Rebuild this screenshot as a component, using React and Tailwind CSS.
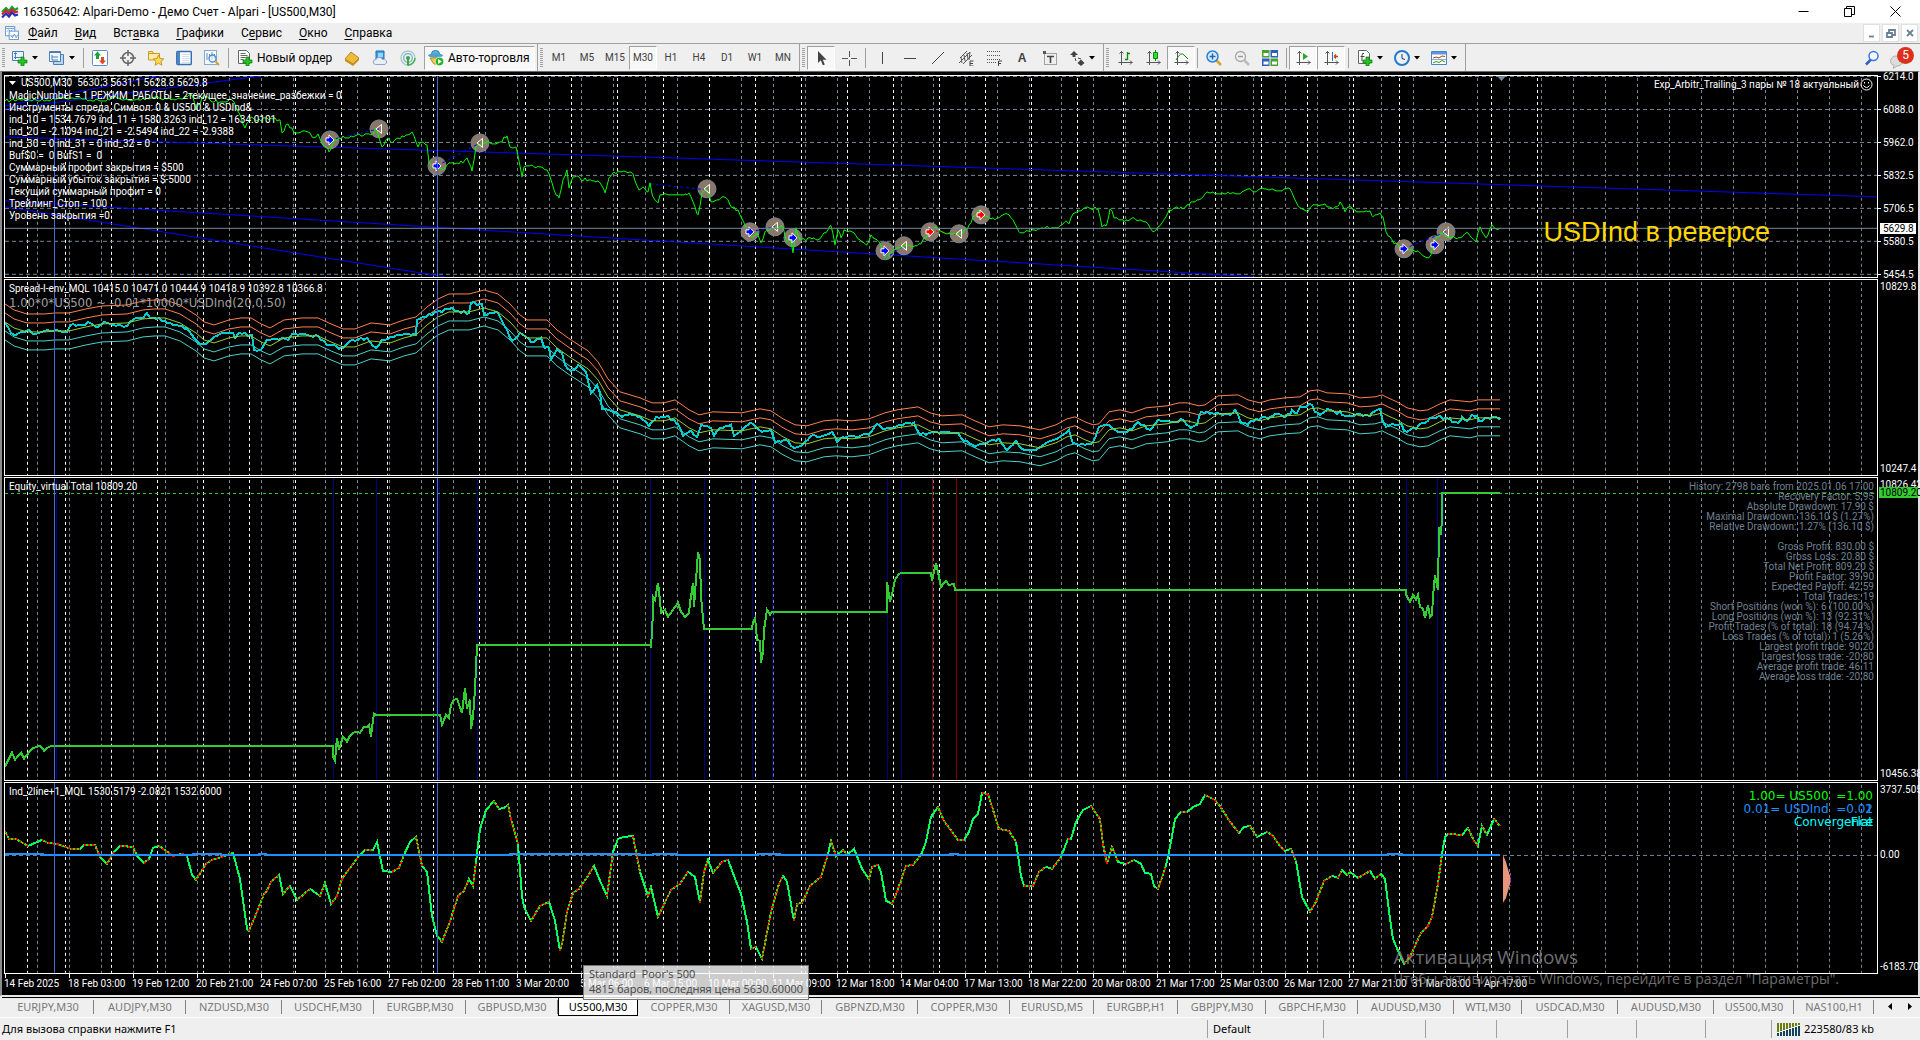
import clsx from 'clsx'

const MENU = [
    ['Ф', 'айл', ''],
    ['В', 'ид', ''],
    ['а', 'вка', 'Вст'],
    ['Г', 'рафики', ''],
    ['е', 'рвис', 'С'],
    ['О', 'кно', ''],
    ['С', 'правка', ''],
]

const TIMEFRAMES = ['M1', 'M5', 'M15', 'M30', 'H1', 'H4', 'D1', 'W1', 'MN']

const TABS = [
    ['EURJPY,M30', 'w-[92px]'],
    ['AUDJPY,M30', 'w-[92px]'],
    ['NZDUSD,M30', 'w-[96px]'],
    ['USDCHF,M30', 'w-[92px]'],
    ['EURGBP,M30', 'w-[92px]'],
    ['GBPUSD,M30', 'w-[92px]'],
    ['US500,M30', 'w-[80px]'],
    ['COPPER,M30', 'w-[92px]'],
    ['XAGUSD,M30', 'w-[92px]'],
    ['GBPNZD,M30', 'w-[96px]'],
    ['COPPER,M30', 'w-[92px]'],
    ['EURUSD,M5', 'w-[84px]'],
    ['EURGBP,H1', 'w-[84px]'],
    ['GBPJPY,M30', 'w-[88px]'],
    ['GBPCHF,M30', 'w-[92px]'],
    ['AUDUSD,M30', 'w-[96px]'],
    ['WTI,M30', 'w-[68px]'],
    ['USDCAD,M30', 'w-[96px]'],
    ['AUDUSD,M30', 'w-[96px]'],
    ['US500,M30', 'w-[80px]'],
    ['NAS100,H1', 'w-[80px]'],
]

const TIMES = [
    '14 Feb 2025', '18 Feb 03:00', '19 Feb 12:00', '20 Feb 21:00', '24 Feb 07:00', '25 Feb 16:00', '27 Feb 02:00', '28 Feb 11:00',
    '3 Mar 20:00', '5 Mar 06:00', '6 Mar 15:00', '10 Mar 00:00', '11 Mar 09:00', '12 Mar 18:00', '14 Mar 04:00', '17 Mar 13:00',
    '18 Mar 22:00', '20 Mar 08:00', '21 Mar 17:00', '25 Mar 03:00', '26 Mar 12:00', '27 Mar 21:00', '31 Mar 08:00', '1 Apr 17:00',
]

const COMMENT = [
    'MagicNumber = 1 РЕЖИМ_РАБОТЫ = 2текущее_значение_разбежки = 0',
    'Инструменты спреда, Символ: 0 & US500 & USDInd&',
    'ind_10 = 1534.7679 ind_11 = 1580.3263 ind_12 = 1634.0101',
    'ind_20 = -2.1094 ind_21 = -2.5494 ind_22 = -2.9388',
    'ind_30 = 0 ind_31 = 0 ind_32 = 0',
    'BufS0 =  0 BufS1 =  0',
    'Суммарный профит закрытия = $500',
    'Суммарный убыток закрытия = $-5000',
    'Текущий суммарный профит = 0',
    'Трейлинг_Стоп = 100',
    'Уровень закрытия =0',
]

const STATS = [
    'History: 2798 bars from 2025.01.06 17:00',
    'Recovery Factor: 5.95',
    'Absolute Drawdown: 17.90 $',
    'Maximal Drawdown: 136.10 $ (1.27%)',
    'Relative Drawdown: 1.27% (136.10 $)',
    '',
    'Gross Profit: 830.00 $',
    'Gross Loss: 20.80 $',
    'Total Net Profit: 809.20 $',
    'Profit Factor: 39.90',
    'Expected Payoff: 42.59',
    'Total Trades: 19',
    'Short Positions (won %): 6 (100.00%)',
    'Long Positions (won %): 13 (92.31%)',
    'Profit Trades (% of total): 18 (94.74%)',
    'Loss Trades (% of total): 1 (5.26%)',
    'Largest profit trade: 90.20',
    'Largest loss trade: -20.80',
    'Average profit trade: 46.11',
    'Average loss trade: -20.80',
]

const pts = (s) => s.trim().split(/\s+/).map((p) => p.split(',').map(Number))
const join = (list) => list.map((p) => p.join(',')).join(' ')

// intraday wobble between the closing prices
function jagged(list, amp, step) {
    let seed = 7
    const rnd = () => {
        seed = (seed * 16807) % 2147483647
        return seed / 2147483647 - 0.5
    }
    const out = [list[0]]
    for (let i = 1; i < list.length; i++) {
        const [x0, y0] = list[i - 1]
        const [x1, y1] = list[i]
        for (let x = x0 + step; x < x1; x += step) {
            out.push([x, Math.round(y0 + ((y1 - y0) * (x - x0)) / (x1 - x0) + rnd() * 2 * amp)])
        }
        out.push([x1, y1])
    }
    return out
}

const PRICE = pts(`5,101 24,99 45,101 61,97 82,99 106,101 112,97 131,101 155,97 175,100 192,95 196,110 204,95 212,102 232,100
237,110 245,128 251,117 257,121 265,118 280,120 282,133 288,124 295,133 308,132 314,138 318,134 322,143 329,152 333,143 339,138
351,136 373,134 376,128 382,147 388,138 392,143 402,136 412,132 418,147 422,142 427,145 429,163 436,167 443,170 449,163 463,163
467,158 472,171 476,147 484,143 500,142 507,136 510,147 516,147 522,177 524,167 539,167 547,170 550,177 554,190 559,198 563,180
567,170 569,188 573,177 592,181 600,183 605,193 609,178 614,172 633,174 639,190 643,187 648,192 650,183 653,197 658,203 660,195
685,194 689,193 693,202 698,215 702,193 707,190 711,202 722,197 728,200 732,208 738,210 744,223 748,232 752,238 757,233 761,243
765,232 775,228 783,227 787,242 790,237 793,253 796,228 800,240 820,239 831,226 835,245 838,230 841,238 844,230 854,233 860,240
867,245 871,235 881,245 886,259 891,253 897,248 905,245 913,247 922,242 930,232 936,227 942,232 956,235 967,230 973,217 979,210
985,217 995,220 1007,214 1013,220 1020,233 1032,230 1042,228 1058,228 1067,222 1069,224 1073,214 1089,208 1098,209 1102,227
1107,224 1110,209 1115,218 1124,222 1134,218 1148,224 1154,232 1162,223 1169,210 1175,208 1185,208 1191,202 1199,200 1205,194
1222,193 1238,194 1248,189 1256,192 1262,188 1280,191 1290,189 1296,202 1300,208 1308,212 1311,207 1323,205 1333,209 1337,207
1340,202 1345,212 1349,207 1356,212 1370,211 1373,217 1380,213 1383,217 1386,232 1392,240 1400,248 1419,252 1427,258 1431,255
1433,245 1441,233 1447,237 1458,238 1468,233 1476,242 1480,227 1486,238 1492,225 1496,229 1500,228`)

const ENVELOPE = pts(`5,322 14,328 27,332 45,332 55,331 69,331 86,327 102,324 127,323 143,319 155,318 165,318 180,323 196,333 204,340
214,343 229,338 241,336 251,336 261,342 270,346 284,338 302,336 318,336 331,342 343,347 355,347 371,341 390,343 404,338 416,335
427,325 438,317 449,312 469,312 484,308 498,312 510,322 520,333 527,338 547,338 557,348 571,358 588,369 598,380 608,397 620,410
640,416 652,421 664,421 675,418 689,428 699,433 713,430 742,431 760,427 771,429 783,437 795,443 807,444 824,439 836,438 852,439
869,437 885,431 897,428 918,425 930,431 942,434 962,433 975,439 989,445 1003,443 1020,444 1040,448 1056,443 1067,437 1075,435
1085,440 1093,443 1099,442 1109,430 1120,428 1132,431 1146,426 1167,424 1179,421 1187,421 1199,424 1205,423 1218,414 1238,413
1248,418 1260,421 1270,418 1285,416 1300,415 1310,409 1318,408 1327,411 1347,412 1360,416 1375,415 1382,413 1388,416 1397,420
1407,426 1420,429 1428,428 1440,422 1450,418 1470,420 1478,418 1500,418`)

const SPREAD = pts(`5,323 11,333 16,335 29,330 33,334 47,330 67,332 70,326 90,323 98,327 104,322 124,327 133,320 143,318 147,313 151,318
159,318 167,323 186,328 194,338 200,344 208,342 220,334 233,333 235,338 239,333 252,335 254,350 261,350 267,340 282,338 288,340
292,334 318,336 327,345 343,348 349,342 367,338 376,348 382,340 394,337 402,335 416,335 417,320 433,313 449,309 469,313 471,303
482,304 484,315 498,313 504,325 512,341 520,333 531,342 541,338 545,348 549,348 551,359 557,349 562,353 565,365 571,371 578,365
586,372 591,393 597,385 600,393 602,409 616,412 622,417 629,414 640,417 649,426 656,417 668,416 678,424 683,436 691,431 697,437
701,425 711,428 714,436 720,428 731,425 734,436 742,430 750,423 762,432 771,430 775,443 785,440 795,448 805,442 811,436 820,437
832,432 837,442 844,438 869,435 877,424 885,429 897,426 914,423 920,435 930,433 958,433 964,441 975,447 987,443 999,439 1007,450
1016,441 1024,450 1036,450 1048,442 1060,437 1069,430 1073,443 1085,445 1093,442 1099,427 1109,425 1118,432 1132,430 1138,422
1150,430 1158,420 1175,422 1181,419 1191,428 1197,425 1201,412 1211,413 1230,415 1235,410 1241,423 1248,425 1256,419 1270,417
1275,414 1285,417 1290,415 1292,410 1297,413 1300,407 1312,405 1315,412 1320,415 1327,409 1333,411 1337,414 1340,411 1342,415
1370,416 1374,412 1380,409 1383,422 1386,427 1392,424 1402,425 1404,431 1410,430 1417,428 1420,424 1425,423 1430,418 1437,417
1450,418 1452,422 1458,423 1462,417 1467,421 1472,415 1477,416 1479,421 1487,418 1500,418`)

const EQUITY = pts(`5,767 9,759 12,753 15,760 21,753 24,759 32,749 40,746 44,751 49,747 55,746 333,746 333,757 335,761 337,738 339,750
343,737 347,742 350,736 355,732 360,733 364,727 367,727 369,725 371,737 373,720 374,714 376,715 440,715 442,725 446,715 449,718
451,705 454,700 457,699 462,713 465,688 467,709 470,700 471,729 473,717 475,690 477,645 650,645 651,648 653,613 653,597 655,600
658,583 660,601 661,613 665,610 668,617 673,610 678,603 681,612 685,617 689,613 690,603 693,583 694,607 696,580 698,552 700,560
701,597 704,629 752,629 753,622 755,618 757,640 760,641 761,663 763,652 764,630 767,610 770,615 772,612 887,612 887,582 890,602
893,590 895,580 899,574 902,573 931,573 932,581 936,563 938,572 941,587 946,581 949,585 954,584 955,590 1406,590 1406,595
1410,602 1413,595 1416,600 1418,595 1420,607 1423,609 1425,618 1428,605 1430,617 1432,615 1433,597 1435,575 1437,586 1438,590
1439,527 1441,535 1442,518 1442,493 1500,493`)

const OSC = pts(`5,832 9,840 16,840 28,847 42,841 48,844 57,845 71,850 80,850 84,846 95,846 100,858 107,865 114,853 120,847 133,848
137,857 144,864 149,860 153,849 159,847 173,857 182,855 187,857 192,876 196,881 206,865 212,861 222,858 233,854 240,880 247,930
249,932 257,913 264,895 267,892 271,883 279,876 283,895 290,887 297,901 310,890 320,897 325,884 331,905 337,897 342,880 359,857
365,851 373,851 377,843 383,872 392,873 399,869 404,856 410,843 416,838 422,867 427,873 432,917 437,937 442,943 450,923 458,897
464,892 469,880 473,887 476,863 480,830 486,811 494,802 499,810 504,809 508,806 511,820 518,845 522,897 524,908 531,922 540,907
549,903 555,922 560,952 563,940 567,913 573,894 579,890 588,877 594,867 600,882 607,897 613,853 618,840 624,838 633,837 640,873
648,897 651,888 658,918 671,891 680,885 688,873 695,878 700,904 704,873 708,861 713,874 722,863 728,861 734,877 741,895 747,923
751,950 756,948 762,960 771,913 779,885 783,877 787,883 794,922 797,905 802,904 810,887 821,878 828,855 831,842 836,857 843,851
847,856 854,850 862,870 869,880 872,868 878,866 881,873 886,902 892,905 897,893 906,867 913,866 921,856 926,843 931,818 938,808
944,822 958,841 964,841 969,833 973,820 978,815 982,794 988,795 999,830 1009,832 1016,843 1021,877 1024,887 1033,887 1039,873
1046,868 1052,870 1061,858 1068,840 1071,840 1076,823 1083,811 1091,807 1100,820 1103,845 1107,865 1112,848 1118,863 1126,865
1134,861 1141,865 1145,874 1151,875 1154,887 1158,890 1166,867 1171,843 1175,820 1181,813 1187,813 1193,808 1200,805 1205,796
1215,801 1222,810 1230,823 1239,834 1244,828 1250,827 1257,838 1267,833 1273,837 1280,847 1285,852 1291,850 1296,862 1302,898
1310,913 1316,903 1324,882 1332,877 1338,879 1342,871 1347,876 1350,873 1358,879 1370,872 1375,880 1381,875 1385,880 1390,920
1393,940 1398,952 1404,965 1410,958 1421,934 1428,927 1432,918 1438,885 1442,855 1445,838 1448,835 1462,836 1468,829 1474,842
1478,847 1482,827 1487,836 1494,820 1500,827`)

const ZERO = 856

const TRENDS = [
    [5, 106, 165, 75], [5, 109, 261, 76], [5, 137, 640, 157], [640, 157, 1260, 177], [1260, 177, 1877, 197],
    [5, 201, 640, 240], [640, 240, 1252, 277], [5, 207, 445, 277],
]

const DEALS = [
    [330, 140, 'buy'], [379, 129, 'out'], [437, 166, 'buy'], [480, 143, 'out'], [707, 189, 'out'], [750, 232, 'buy'], [775, 227, 'out'],
    [793, 238, 'buy'], [885, 251, 'buy'], [904, 246, 'out'], [930, 232, 'sell'], [959, 234, 'out'], [981, 215, 'sell'],
    [1404, 249, 'buy'], [1435, 245, 'buy'], [1446, 232, 'out'],
]

const LINKS = [
    [330, 140, 379, 129, '#0000ff'], [437, 166, 480, 143, '#0000ff'], [650, 184, 707, 190, '#0000ff'], [750, 232, 775, 227, '#0000ff'],
    [885, 259, 904, 246, '#0000ff'], [930, 230, 959, 235, '#ff0000'], [1404, 249, 1446, 232, '#0000ff'],
]

const ENTRIES = [56, 333, 376, 439, 477, 650, 704, 752, 772, 887, 901, 1406, 1437, 1443]

function Grid({ top, height }) {
    const cells = Array.from({ length: 59 }, (_, i) => 5 + 32 * i)
    const days = [27, ...Array.from({ length: 33 }, (_, i) => 65 + 46 * i)]
    return (
        <g strokeDasharray="3 3" strokeDashoffset="-2" shapeRendering="crispEdges">
            {cells.slice(1).map((x) => <line key={x} x1={x + 0.5} x2={x + 0.5} y1={top} y2={top + height} stroke="#778899" />)}
            {days.map((x) => <line key={x} x1={x + 0.5} x2={x + 0.5} y1={top} y2={top + height} stroke="#fff" />)}
        </g>
    )
}

function Guides({ top, height }) {
    return (
        <g stroke="#4169e1" shapeRendering="crispEdges">
            <line x1="54.5" x2="54.5" y1={top} y2={top + height} />
            <line x1="437.5" x2="437.5" y1={top} y2={top + height} />
        </g>
    )
}

function Plot({ top, height, children }) {
    return (
        <svg viewBox={`5 ${top} 1872 ${height}`} preserveAspectRatio="none" className="absolute inset-0 h-full w-full" fill="none">
            <Grid top={top} height={height} />
            {children}
            <Guides top={top} height={height} />
        </svg>
    )
}

function Panel({ plot, axis, children }) {
    return (
        <section className="flex min-h-0">
            <div className="relative min-w-0 flex-1 border border-white">
                {plot}
                {children}
            </div>
            <div className="relative w-[40px] shrink-0 whitespace-pre pl-[2px] text-[10px] leading-[11px] text-white">{axis}</div>
        </section>
    )
}

function Deal({ x, y, kind }) {
    return (
        <g transform={`translate(${x} ${y})`} stroke="#fff">
            {kind === 'out' && <path d="M2.500-4.500v9l-5.500-4.500z" />}
            {kind === 'buy' && <path d="M-4-2h3v-3l5 5l-5 5v-3h-3z" fill="#0000ff" />}
            {kind === 'sell' && <path d="M-4-2h3v-3l5 5l-5 5v-3h-3z" fill="#ff0000" />}
        </g>
    )
}

function PricePlot() {
    return (
        <Plot top={76} height={201}>
            <g stroke="#778899" strokeDasharray="4 3" shapeRendering="crispEdges">
                {[76, 109, 142, 175, 208, 241, 274].map((y) => <line key={y} x1="5" x2="1877" y1={y + 0.5} y2={y + 0.5} />)}
            </g>
            {TRENDS.map(([x1, y1, x2, y2]) => <line key={`${x1}-${y1}`} x1={x1} y1={y1} x2={x2} y2={y2} stroke="#0000ff" shapeRendering="crispEdges" />)}
            {DEALS.map(([x, y]) => <circle key={x} cx={x} cy={y} r="9" fill="#8b7765" stroke="#778899" />)}
            {LINKS.map(([x1, y1, x2, y2, c]) => <line key={x1} x1={x1} y1={y1} x2={x2} y2={y2} stroke={c} strokeDasharray="3 3" />)}
            <polyline points={join(jagged(PRICE, 1.6, 2))} stroke="#00ff00" shapeRendering="crispEdges" />
            {DEALS.map(([x, y, kind]) => <Deal key={x} x={x} y={y} kind={kind} />)}
            <line x1="5" x2="1877" y1="228.5" y2="228.5" stroke="#778899" shapeRendering="crispEdges" />
            <path d="M1497 76h9l-4.500 5z" fill="#778899" />
        </Plot>
    )
}

function SpreadPlot() {
    const shift = (dy) => join(ENVELOPE.map(([x, y]) => [x, y + dy]))
    return (
        <Plot top={280} height={195}>
            <g shapeRendering="crispEdges">
                <polyline points={shift(-18)} stroke="#ff7f50" />
                <polyline points={shift(-9)} stroke="#ff7f50" />
                <polyline points={shift(9)} stroke="#48d1cc" />
                <polyline points={shift(18)} stroke="#48d1cc" />
                <polyline points={join(jagged(SPREAD, 1.4, 3))} stroke="#00ced1" strokeWidth="2" />
                <polyline points={shift(0)} stroke="#9acd32" />
            </g>
        </Plot>
    )
}

function EquityPlot() {
    return (
        <Plot top={478} height={303}>
            <g shapeRendering="crispEdges">
                {ENTRIES.map((x) => <line key={x} x1={x + 0.5} x2={x + 0.5} y1="478" y2="781" stroke="#000080" />)}
                {[932, 956].map((x) => <line key={x} x1={x + 0.5} x2={x + 0.5} y1="478" y2="781" stroke="#800000" />)}
                <line x1="5" x2="1877" y1="493.5" y2="493.5" stroke="#32cd32" strokeDasharray="3 3" />
                <polyline points={join(EQUITY)} stroke="#32cd32" strokeWidth="2" />
            </g>
        </Plot>
    )
}

function OscillatorPlot() {
    const legs = OSC.slice(1).map((p, i) => ({ from: OSC[i], to: p, away: Math.abs(p[1] - ZERO) > Math.abs(OSC[i][1] - ZERO) }))
    return (
        <Plot top={784} height={190}>
            <line x1="5" x2="1877" y1="856.5" y2="856.5" stroke="#778899" strokeDasharray="4 3" shapeRendering="crispEdges" />
            <polyline points={join(OSC)} stroke="#00ff00" strokeWidth="2" shapeRendering="crispEdges" />
            {legs.map(({ from, to, away }) => (
                <line key={from[0]} x1={from[0]} y1={from[1]} x2={to[0]} y2={to[1]} strokeWidth={away ? 1 : 2} shapeRendering="crispEdges" stroke={away ? '#00ffff' : '#ff0000'} strokeDasharray={away ? '4 2' : '2 2'} />
            ))}
            <path d="M5 855h38v1h150v-1h28v1h38v-1h7v1h244v-1h130v1h13v-1h23v1h82v-1h22v1h170v-1h8v1h430v-1h14v1h98" stroke="#1e90ff" strokeWidth="2" shapeRendering="crispEdges" />
            <path d="M1503 856l3 7l4 14l1 4l-1 4l-4 14l-3 5z" fill="#e9967a" />
            <line x1="1510.500" x2="1510.500" y1="874" y2="887" stroke="#8a2be2" strokeDasharray="3 3" />
        </Plot>
    )
}

function Chart() {
    return (
        <main className="relative flex min-h-0 flex-1 flex-col border-y border-l-2 border-r-2 border-b-[#e3dfe3] border-l-[#8c8c8c] border-r-[#e3dfe3] border-t-[#696969] bg-black pl-[2px] pt-[3px] font-[Roboto,sans-serif] text-[10px] text-white">
            <div className="grid min-h-0 flex-1 grid-rows-[203fr_197fr_305fr_192fr] gap-px">
                <Panel
                    plot={<PricePlot />}
                    axis={
                        <>
                            <div className="absolute inset-x-0 -bottom-[2px] -top-[4px] flex flex-col justify-between pl-[5px]">
                                {['6214.0', '6088.0', '5962.0', '5832.5', '5706.5', '5580.5', '5454.5'].map((v) => (
                                    <span key={v} className="before:absolute before:left-0 before:mt-[5px] before:h-px before:w-[3px] before:bg-white">{v}</span>
                                ))}
                            </div>
                            <div className="absolute left-[2px] top-[73%] w-[36px] bg-white pl-[3px] text-black">5629.8</div>
                        </>
                    }
                >
                    <div className="absolute left-[4px] top-0 whitespace-pre leading-[12px]">
                        <div className="flex items-center gap-[5px] leading-[14px]">
                            <svg viewBox="0 0 7 4" className="h-[4px] w-[7px]"><path d="M0 0h7l-3.500 4z" fill="#fff" /></svg>
                            US500,M30  5630.3 5631.1 5628.8 5629.8
                        </div>
                        {COMMENT.map((line) => <div key={line}>{line}</div>)}
                    </div>
                    <div className="absolute right-[4px] top-[2px] flex items-center gap-[1px] leading-[12px]">
                        Exp_Arbitr_Trailing_3 пары № 18 актуальный
                        <svg viewBox="0 0 13 13" className="h-[13px] w-[13px]" fill="none" stroke="#fff">
                            <circle cx="6.500" cy="6.500" r="5.500" />
                            <path d="M3.500 7.500q3 4 6 0M4.500 4v1.500M8.500 4v1.500" />
                        </svg>
                    </div>
                    <div className="absolute right-[107px] top-[70%] whitespace-nowrap font-['Liberation_Sans',Arial,sans-serif] text-[27px] leading-[30px] text-[#ffd700]">USDInd в реверсе</div>
                </Panel>
                <Panel
                    plot={<SpreadPlot />}
                    axis={<div className="flex h-full flex-col justify-between py-[2px]"><span>10829.8</span><span>10247.4</span></div>}
                >
                    <div className="absolute left-[4px] top-[2px] whitespace-pre">
                        <div className="leading-[13px]">Spread-I-env_MQL 10415.0 10471.0 10444.9 10418.9 10392.8 10366.8</div>
                        <div className="font-['DejaVu_Sans_Condensed','DejaVu_Sans',sans-serif] text-[13px] leading-[16px] text-[#a0a0a0]">1.00*0*US500 ~ -0.01*10000*USDInd(20,0.50)</div>
                    </div>
                </Panel>
                <Panel
                    plot={<EquityPlot />}
                    axis={
                        <>
                            <div className="flex h-full flex-col justify-between py-[2px]"><span>10826.42</span><span>10456.38</span></div>
                            <div className="absolute left-px right-0 top-[10px] bg-[#32cd32] pl-px text-black">10809.20</div>
                        </>
                    }
                >
                    <div className="absolute left-[4px] top-[2px] leading-[13px]">Equity_virtual Total 10809.20</div>
                    <div className="absolute right-[3px] top-[4px] text-right leading-[10px] text-[#708090]">
                        {STATS.map((line, i) => <div key={i} className="min-h-[10px]">{line}</div>)}
                    </div>
                </Panel>
                <Panel
                    plot={<OscillatorPlot />}
                    axis={
                        <>
                            <div className="flex h-full flex-col justify-between py-[2px]"><span>3737.505</span><span>-6183.704</span></div>
                            <div className="absolute left-[2px] top-[35%]">0.00</div>
                        </>
                    }
                >
                    <div className="absolute left-[4px] top-[2px] leading-[13px]">Ind_2line+1_MQL 1530.5179 -2.0821 1532.6000</div>
                    <div className="absolute right-[4px] top-[7px] whitespace-pre text-right font-['DejaVu_Sans',Verdana,sans-serif] text-[12px] leading-[13px]">
                        <div className="text-[#00ff00]">1.00= US500  =1.00</div>
                        <div className="relative text-[#1e90ff]">0.01= USDInd  =0.01<span className="absolute right-0 top-0">2</span></div>
                        <div className="relative text-[#00ffff]">Convergence<span className="absolute right-0 top-0">Flat</span></div>
                    </div>
                </Panel>
            </div>
            <div className="flex h-[21px] overflow-hidden whitespace-nowrap pr-[40px]">
                {TIMES.map((t) => (
                    <div key={t} className="relative w-[64px] shrink-0 pt-[4px] leading-[11px] before:absolute before:left-px before:top-0 before:h-[4px] before:w-px before:bg-white">{t}</div>
                ))}
            </div>

            <div className="pointer-events-none absolute bottom-[6px] right-[79px] whitespace-nowrap font-['Open_Sans','Noto_Sans',sans-serif] text-[#8c8c8c]/80">
                <div className="text-[19px] leading-[24px]">Активация Windows</div>
                <div className="text-[14px] leading-[20px]">Чтобы активировать Windows, перейдите в раздел "Параметры".</div>
            </div>
            <div role="tooltip" className="absolute -bottom-[5px] left-[581px] z-10 h-[35px] w-[226px] whitespace-pre border border-[#767676] bg-white/80 pl-[5px] font-['Open_Sans','Noto_Sans',sans-serif] text-[11px] leading-[15px] text-[#444]">
                <div>Standard  Poor's 500</div>
                <div>4815 баров, последняя цена 5630.60000</div>
            </div>
        </main>
    )
}

function Icon({ children }) {
    return <svg viewBox="0 0 16 16" className="h-[16px] w-[16px] shrink-0" fill="none" strokeWidth="1">{children}</svg>
}

function Tool({ label, pressed, menu, children }) {
    return (
        <button
            type="button"
            aria-label={label}
            className={clsx(
                'flex h-[24px] shrink-0 items-center border text-[#404040]',
                menu ? 'w-[37px] gap-[4px] pl-[4px]' : 'w-[28px] justify-center',
                pressed ? 'border-b-white border-l-[#a0a0a0] border-r-white border-t-[#a0a0a0] bg-[#f8f8f8]' : 'border-transparent'
            )}
        >
            {children}
            {menu && <svg viewBox="0 0 6 4" className="h-[4px] w-[6px]"><path d="M0 0h6l-3 3.500z" fill="#000" /></svg>}
        </button>
    )
}

function Sep() {
    return <span className="mx-[2px] h-[20px] w-px shrink-0 bg-[#a0a0a0]" />
}

function Grip() {
    return <span className="mr-[2px] h-[20px] w-[3px] shrink-0 bg-[repeating-linear-gradient(#a0a0a0_0_1px,#efefef_1px_2px)]" />
}

function GroupEnd() {
    return <span className="mx-[2px] h-full w-px shrink-0 bg-[#a0a0a0]" />
}

const Plus = () => <path d="M9 7h3v3h3v3h-3v3h-3v-3H6v-3h3z" fill="#22c522" stroke="#0a7a0a" strokeWidth=".7" />
const Axes = () => <path d="M4.500 1v14M2.500 3.500l2-2l2 2M1.500 12.500h14M13 10.500l2 2l-2 2" stroke="#555" />

function Toolbar() {
    return (
        <div className="flex h-[28px] shrink-0 items-center border-t border-[#a0a0a0] bg-[#efefef] pl-[2px]">
            <Grip />
            <Tool label="Новый график" menu>
                <Icon><path d="M.5 1.500h11v9H.5z" fill="#e8f3ff" stroke="#4a7fb5" /><path d="M3.500 3v6M2 4l1.500-1.500L5 4M2 7.500h7" stroke="#4a7fb5" /><Plus /></Icon>
            </Tool>
            <Tool label="Профили" menu>
                <Icon><path d="M4.500 4.500h10v10h-10z" fill="#bcd6ee" stroke="#4a7fb5" /><path d="M.5 1.500h11v10H.5z" fill="#f2f8ff" stroke="#4a7fb5" /><path d="M.5 2.500h11M3 5v5h6M3 7h6" stroke="#4a7fb5" /></Icon>
            </Tool>
            <Sep />
            <Tool label="Обзор рынка">
                <Icon><rect x=".5" y=".5" width="15" height="15" rx="1" fill="#fff" stroke="#5b8fc7" /><path d="M5.500 1.500L9 5.500H7V9H4V5.500H2z" fill="#1fa22e" /><path d="M10.500 14.500l-3.500-4h2V7h3v3.500h2z" fill="#e0492e" /></Icon>
            </Tool>
            <Tool label="Окно данных">
                <Icon><circle cx="8" cy="8" r="5.500" stroke="#666" strokeWidth="1.500" /><path d="M8 0v6M8 10v6M0 8h6M10 8h6" stroke="#666" strokeWidth="1.500" /></Icon>
            </Tool>
            <Tool label="Навигатор">
                <Icon><path d="M.5 10V1.500h4l1 2h6V7" fill="#ffe08a" stroke="#c99a2a" /><path d="M.5 3.500h11V10H.5z" fill="#fdeaa5" stroke="#c99a2a" /><path d="M10.500 5l1.600 3.500l3.700.4l-2.800 2.500l.9 3.800l-3.400-2l-3.400 2l.9-3.800l-2.700-2.500l3.600-.4z" fill="#ffd94a" stroke="#b98514" strokeWidth=".8" /></Icon>
            </Tool>
            <Tool label="Терминал">
                <Icon><rect x=".8" y="1.500" width="14.500" height="13" rx="1" fill="#fff" stroke="#356fb0" strokeWidth="1.500" /><path d="M1 2h3v12H1z" fill="#4c86c6" /><path d="M6 4.500h8M6 6.500h7M6 8.500h8M6 10.500h7M6 12.500h8" stroke="#cfdff0" /></Icon>
            </Tool>
            <Tool label="Тестер стратегий">
                <Icon><rect x=".5" y=".5" width="12" height="14" fill="#f4f8fc" stroke="#86a9cc" /><path d="M3 3v7M5.500 4v5M8 2v7M10.500 4v4" stroke="#6b90b8" /><circle cx="8.500" cy="8.500" r="3.500" fill="#dff0ffaa" stroke="#4d8cc8" strokeWidth="1.300" /><path d="M11.500 11.500l3.500 3.500" stroke="#d9a320" strokeWidth="2" /></Icon>
            </Tool>
            <Sep />
            <button type="button" className="flex h-[24px] w-[107px] shrink-0 items-center gap-[4px] whitespace-nowrap pl-[6px] text-[12px]">
                <Icon><path d="M1.500.5h8l3 3v10h-11z" fill="#fff" stroke="#666" /><path d="M3.500 3.500h5M3.500 5.500h7M3.500 7.500h5M3.500 9.500h3" stroke="#666" /><Plus /></Icon>
                Новый ордер
            </button>
            <Tool label="MetaEditor">
                <Icon><path d="M1 9l6-7l8 6l-6 6z" fill="#efbb3a" stroke="#a87408" strokeWidth=".8" /><path d="M1 9v2l8 5v-2zM9 14v2l6-6V8z" fill="#c88d15" /></Icon>
            </Tool>
            <Tool label="Хостинг">
                <Icon><path d="M4 1h8v8H4z" fill="#39a3e8" stroke="#1c6fae" /><path d="M6 4h5M6 6h5" stroke="#fff" /><path d="M3.500 14.500a2.500 2.500 0 0 1 .5-5a3.500 3.500 0 0 1 6.500 0a2.500 2.500 0 0 1 2.500 5z" fill="#e9eef6" stroke="#8ea4c4" /></Icon>
            </Tool>
            <Tool label="Сигналы">
                <Icon><circle cx="8" cy="8" r="7" stroke="#a9c6cf" strokeWidth="1.300" /><circle cx="8" cy="8" r="4.300" stroke="#6fb1c9" strokeWidth="1.300" /><path d="M8 15a7 7 0 0 0 7-7" stroke="#45b649" strokeWidth="1.500" /><circle cx="8" cy="8" r="2" fill="#3fa53f" /><path d="M8 9v6.500" stroke="#3fa53f" strokeWidth="2" /></Icon>
            </Tool>
            <button type="button" aria-pressed="true" className="ml-[2px] flex h-[24px] w-[111px] shrink-0 items-center gap-[4px] whitespace-nowrap border border-b-white border-l-[#a0a0a0] border-r-white border-t-[#a0a0a0] bg-[#f8f8f8] pl-[3px] text-[12px]">
                <Icon><ellipse cx="7.500" cy="3.500" rx="4" ry="3" fill="#62b0dc" stroke="#2f7fae" /><ellipse cx="7.500" cy="5.500" rx="7.500" ry="2.200" fill="#4c9fd0" /><path d="M2 8h11l-4 6H6z" fill="#f2c84b" stroke="#b58a1c" /><circle cx="11.500" cy="11.500" r="4.300" fill="#22b322" stroke="#fff" strokeWidth=".7" /><path d="M10 9v5l4-2.500z" fill="#fff" /></Icon>
                Авто-торговля
            </button>
            <GroupEnd />
            <Grip />
            {TIMEFRAMES.map((t) => (
                <Tool key={t} label={t} pressed={t === 'M30'}><span className="text-[10px]">{t}</span></Tool>
            ))}
            <GroupEnd />
            <Grip />
            <Tool label="Курсор" pressed><Icon><path d="M5 1v12l2.800-2.700l2 5l2-.9l-2-4.600H13.500z" fill="#444" /></Icon></Tool>
            <Tool label="Перекрестие"><Icon><path d="M8.500 1v6M8.500 10v6M1 8.500h6M10 8.500h6" stroke="#555" /></Icon></Tool>
            <Sep />
            <Tool label="Вертикальная линия"><Icon><path d="M8.500 2v12" stroke="#444" /></Icon></Tool>
            <Tool label="Горизонтальная линия"><Icon><path d="M2 8.500h12" stroke="#444" /></Icon></Tool>
            <Tool label="Трендовая линия"><Icon><path d="M2 14L14 2" stroke="#444" /></Icon></Tool>
            <Tool label="Равноудаленный канал">
                <Icon><path d="M1 13L12 2M2 8L9 1M5 14l9-9M3 7l1 6M6 5l1 6M9 3l1 6M12 2l-1 8" stroke="#555" /><path d="M15.500 11H12v5h3.500M12 13.500h3" stroke="#444" /></Icon>
            </Tool>
            <Tool label="Линии Фибоначчи">
                <Icon><path d="M1 1.500h14M1 5.500h14M1 9.500h14M1 12.500h10" stroke="#555" strokeDasharray="1 1" /><path d="M16 11h-3.500v5M12.500 13.500H15" stroke="#444" /></Icon>
            </Tool>
            <Tool label="Текст"><span className="font-['Liberation_Sans',sans-serif] text-[12px] font-bold">A</span></Tool>
            <Tool label="Текстовая метка">
                <Icon><path d="M2.500 3.500h12v11h-12z" stroke="#555" strokeDasharray="1 1" /><path d="M5 6.500h7M8.500 6v7" stroke="#444" strokeWidth="1.600" /><path d="M1 1h3v3H1z" fill="#555" /></Icon>
            </Tool>
            <Tool label="Стрелки" menu>
                <Icon><path d="M5 1l4 4H6.500v2h-3V5H1z" fill="#444" /><path d="M6 8l1 3M9 8l3 1" stroke="#444" /><path d="M12 9.500l3.500 3.500l-3.500 3l-3.500-3z" fill="#444" /></Icon>
            </Tool>
            <GroupEnd />
            <Grip />
            <Tool label="Бары"><Icon><Axes /><path d="M10.500 2v8M8 9.500h2.500M10.500 3.500H13" stroke="#0a8a0a" strokeWidth="1.300" /></Icon></Tool>
            <Tool label="Свечи"><Icon><Axes /><path d="M10.500 0v11" stroke="#0a8a0a" /><path d="M8.500 2.500h4v6h-4z" fill="#2ee02e" stroke="#0a8a0a" /></Icon></Tool>
            <Tool label="Линия" pressed><Icon><Axes /><path d="M3 10q5-9 8-5l4 4" stroke="#0a8a0a" /></Icon></Tool>
            <Sep />
            <Tool label="Приблизить">
                <Icon><path d="M10.500 10.500l4.500 4.500" stroke="#d9a320" strokeWidth="2.500" /><circle cx="6.500" cy="6.500" r="5.500" fill="#d3ebff" stroke="#2f7fd0" strokeWidth="1.500" /><path d="M3.500 6.500h6M6.500 3.500v6" stroke="#2367b0" strokeWidth="1.500" /></Icon>
            </Tool>
            <Tool label="Отдалить">
                <Icon><path d="M10.500 10.500l4.500 4.500" stroke="#bcbcbc" strokeWidth="2.500" /><circle cx="6.500" cy="6.500" r="5" fill="#f0f0f0" stroke="#a8a8a8" strokeWidth="1.300" /><path d="M4 6.500h5" stroke="#999" strokeWidth="1.500" /></Icon>
            </Tool>
            <Tool label="Окна">
                <Icon><path d="M0 0h7.500v7.500H0zM8.500 8.500H16V16H8.500z" fill="#46a32c" /><path d="M8.500 0H16v7.500H8.500zM0 8.500h7.500V16H0z" fill="#2c5fc0" /><path d="M1.500 3h5v3h-5zM10 3h5v3h-5zM1.500 11.500h5v3h-5zM10 11.500h5v3h-5z" fill="#fff" /></Icon>
            </Tool>
            <Sep />
            <Tool label="Автопрокрутка" pressed><Icon><Axes /><path d="M8 3v7l5-3.500z" fill="#2ba52b" /></Icon></Tool>
            <Tool label="Сдвиг графика" pressed><Icon><Axes /><path d="M9.500 2v9" stroke="#2d6fb0" /><path d="M11 6.500h4M11 6.500l2-2M11 6.500l2 2" stroke="#c0451d" strokeWidth="1.300" /></Icon></Tool>
            <span className="mx-[3px] h-[20px] w-px shrink-0 bg-[#a0a0a0]" />
            <Tool label="Индикаторы" menu>
                <Icon><path d="M1.500.5h8l3 3v10h-11z" fill="#fff" stroke="#666" /><path d="M7 3.500q-2-1-2 2V11M3.500 6.500h4" stroke="#444" /><Plus /></Icon>
            </Tool>
            <Tool label="Периоды" menu>
                <Icon><circle cx="8" cy="8" r="7" fill="#e9f4ff" stroke="#2678c8" strokeWidth="2" /><path d="M8 4v4.500l3 1" stroke="#333" /></Icon>
            </Tool>
            <Tool label="Шаблоны" menu>
                <Icon><path d="M.5 1.500h15v13H.5z" fill="#fff" stroke="#4a86c5" /><path d="M1 2h14v2.500H1z" fill="#5c98d8" /><path d="M2 8l3-1l3 1l3-2l3 .5" stroke="#b03a1c" /><path d="M1 9.500h14" stroke="#9ab" /><path d="M2 13l3-1.500l3 1l3-2l3 1.500" stroke="#2b9a2b" /></Icon>
            </Tool>
            <GroupEnd />
            <div className="ml-auto flex items-center gap-[10px] pr-[6px]">
                <button type="button" aria-label="Поиск"><Icon><path d="M7 9.500L2 14.500" stroke="#2b5fc4" strokeWidth="2.500" /><circle cx="9.500" cy="6" r="4.500" fill="#f2f7ff" stroke="#3c76dc" strokeWidth="1.500" /></Icon></button>
                <button type="button" aria-label="Сообщения" className="relative h-[22px] w-[24px]">
                    <svg viewBox="0 0 14 14" className="absolute bottom-0 left-0 h-[14px] w-[14px]"><path d="M7 1a6 5 0 0 0-3 9.500L3 13.500l4-2.500a6 5 0 0 0 0-10z" fill="#dcdcdc" stroke="#b0b0b0" /></svg>
                    <span className="absolute right-0 top-0 flex h-[17px] w-[17px] items-center justify-center rounded-full bg-[#dc2f1c] text-[12px] text-white">5</span>
                </button>
            </div>
        </div>
    )
}

function TitleBar() {
    return (
        <header className="flex h-[23px] shrink-0 items-center bg-white pr-[2px] text-[12px]">
            <svg viewBox="0 0 18 14" className="ml-px h-[14px] w-[18px]" fill="none" strokeWidth="2.200">
                <path d="M1 7l4-4l3 3l3-4l3 3l3-2" stroke="#17a32b" />
                <path d="M1 9.500l4-4l3 3l3-4l3 3l3-1" stroke="#d8232a" />
                <path d="M1 12.500l4-4l3 3l3-4l3 3l3-1" stroke="#2b2fb5" />
            </svg>
            <h1 className="ml-[4px]">16350642: Alpari-Demo - Демо Счет - Alpari - [US500,M30]</h1>
            <div className="ml-auto flex">
                <button type="button" aria-label="Свернуть" className="flex w-[46px] justify-center"><Glyph d="M.5 5.500h10" /></button>
                <button type="button" aria-label="Развернуть" className="flex w-[46px] justify-center"><Glyph d="M.5 2.500h7v8h-7zM2.500 2.500v-2h8v8h-3" /></button>
                <button type="button" aria-label="Закрыть" className="flex w-[46px] justify-center"><Glyph d="M.5.5l10 10M10.500.5l-10 10" /></button>
            </div>
        </header>
    )
}

function Glyph({ d }) {
    return <svg viewBox="0 0 11 11" className="h-[11px] w-[11px]" fill="none" stroke="#000"><path d={d} /></svg>
}

function MenuBar() {
    return (
        <nav className="flex h-[20px] shrink-0 items-center bg-[#efefef] text-[12px]">
            <svg viewBox="0 0 15 15" className="ml-[5px] mr-px h-[14px] w-[14px]" fill="#fff" stroke="#5c93cc">
                <path d="M.5.5h10v10H.5zM.5 2.500h10M2 6l2-2l2 2l2-2" />
                <path d="M4.500 5.500h10v9h-10zM6 10l2 2.500l2-4l2 4l1.500-3" />
            </svg>
            <div className="flex">
                {MENU.map(([key, rest, lead]) => (
                    <button key={key + rest} type="button" className="pl-[8px] pr-[9px]">{lead}<span className="underline underline-offset-2">{key}</span>{rest}</button>
                ))}
            </div>
            <div className="ml-auto flex gap-[2px] pr-[2px] text-[#6d7f95]">
                {['M2 8.500h5', 'M1 5h5v4H1zM3 4.500V2h6v5H6.500', 'M2 2l6 6M8 2l-6 6'].map((d, i) => (
                    <button key={d} type="button" aria-label={['Свернуть график', 'Восстановить график', 'Закрыть график'][i]} className="flex h-[18px] w-[17px] items-center justify-center border border-[#e0e0e0] bg-white">
                        <svg viewBox="0 0 10 10" className="h-[10px] w-[10px]" fill="none" stroke="currentColor" strokeWidth="1.800"><path d={d} /></svg>
                    </button>
                ))}
            </div>
        </nav>
    )
}

function ChartTabs() {
    return (
        <div className="flex h-[22px] shrink-0 items-stretch border-b border-b-white bg-[#efefef] pl-[2px] pt-px font-['Noto_Sans',sans-serif] text-[11px] text-[#7a7a7a]">
            <div role="tablist" className="flex h-[19px] min-w-0 flex-1 items-start overflow-hidden border-t border-black">
                {TABS.map(([name, width], i) => (
                    <button
                        key={i}
                        type="button"
                        role="tab"
                        aria-selected={i === 6}
                        className={clsx(
                            'relative h-[18px] shrink-0 whitespace-nowrap text-center leading-[16px]',
                            width,
                            i === 6 ? 'border-x border-b border-black bg-white text-black' : 'after:absolute after:right-0 after:top-[2px] after:h-[14px] after:w-px after:bg-[#808080]'
                        )}
                    >
                        {name}
                    </button>
                ))}
                <div className="ml-auto flex h-[16px] w-[44px] shrink-0 items-center justify-around pl-[4px]">
                    <button type="button" aria-label="Назад"><svg viewBox="0 0 4 7" className="h-[7px] w-[4px]"><path d="M4 0v7L0 3.500z" /></svg></button>
                    <button type="button" aria-label="Вперед"><svg viewBox="0 0 4 7" className="h-[7px] w-[4px]"><path d="M0 0v7l4-3.500z" /></svg></button>
                </div>
            </div>
        </div>
    )
}

function StatusBar() {
    return (
        <footer className="flex h-[22px] shrink-0 items-center bg-[#efefef] font-['Noto_Sans',sans-serif] text-[11px] leading-[18px]">
            <div className="flex-1 pl-[2px]">Для вызова справки нажмите F1</div>
            <div className="h-[18px] w-[116px] border-l border-[#a0a0a0] pl-[5px]">Default</div>
            <div className="h-[18px] w-[102px] border-l border-[#a0a0a0]" />
            <div className="h-[18px] w-[71px] border-l border-[#a0a0a0]" />
            <div className="h-[18px] w-[71px] border-l border-[#a0a0a0]" />
            <div className="h-[18px] w-[69px] border-l border-[#a0a0a0]" />
            <div className="h-[18px] w-[69px] border-l border-[#a0a0a0]" />
            <div className="h-[18px] w-[66px] border-l border-[#a0a0a0]" />
            <div className="flex h-[18px] w-[149px] items-center gap-[4px] border-l border-[#a0a0a0] pl-[5px]">
                <svg viewBox="0 0 23 13" className="h-[13px] w-[23px]">
                    {[0, 3, 6, 9, 12, 15, 18, 21].map((x, i) => (
                        <g key={x}>
                            <rect x={x} y="0" width="2" height={9 - i} fill="#6b7d0e" />
                            <rect x={x} y={10 - i} width="2" height={3 + i} fill="#12455c" />
                        </g>
                    ))}
                </svg>
                223580/83 kb
            </div>
        </footer>
    )
}

export default function App() {
    return (
        <div className="flex h-screen min-h-[640px] flex-col overflow-hidden bg-[#efefef] font-[Roboto,'Noto_Sans',sans-serif] text-black">
            <TitleBar />
            <MenuBar />
            <Toolbar />
            <Chart />
            <ChartTabs />
            <StatusBar />
        </div>
    )
}
